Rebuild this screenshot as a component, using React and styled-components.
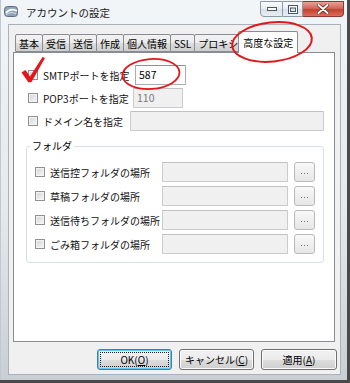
import React from "react";
import styled, { createGlobalStyle } from "styled-components";

const GlobalStyle = createGlobalStyle`
  html, body { margin: 0; padding: 0; background: #fff; }
  body {
    font-family: "Noto Sans CJK JP", "Noto Sans", sans-serif;
    font-size: 10px;
    color: #000;
  }
  * { box-sizing: border-box; }
`;

const Window = styled.div`
  position: relative;
  width: 350px;
  height: 383px;
  display: flex;
  flex-direction: column;
  padding: 0 9px 8px 8px;
  background: linear-gradient(180deg, #f2f5f8 0%, #e4e9ee 55%, #c9ced4 100%);
  box-shadow: inset -3px -3px 0 #4a4a4a, inset 1px 0 0 #c3c8ce;
  overflow: hidden;
`;

const TitleBar = styled.div`
  height: 24px;
  display: flex;
  align-items: flex-start;
`;

const TitleIcon = styled.svg`
  width: 15px;
  height: 13px;
  margin: 5px 0 0 -4px;
`;

const TitleText = styled.span`
  line-height: 24px;
  padding-top: 1px;
  margin-left: 7px;
  font-size: 10.5px;
  color: #1a1a1a;
`;

const CaptionGroup = styled.div`
  display: flex;
  margin-left: auto;
  margin-right: -3px;
  margin-top: 1px;
`;

const CaptionButton = styled.div`
  width: ${(p) => p.$w}px;
  height: 16px;
  display: flex;
  align-items: center;
  justify-content: center;
  border: 1px solid ${(p) => (p.$close ? "#8a3a33" : "#8e99a5")};
  border-left: ${(p) => (p.$first ? "1px solid #8e99a5" : "none")};
  border-radius: ${(p) => (p.$first ? "0 0 0 4px" : p.$close ? "0 0 4px 0" : "0")};
  background: ${(p) =>
    p.$close
      ? "linear-gradient(180deg, #e6a295 0%, #d0695a 45%, #c4412f 55%, #d8705d 100%)"
      : "linear-gradient(180deg, #f8fafc 0%, #e8edf2 50%, #d9e0e7 51%, #e9eef3 100%)"};
`;

const Client = styled.div`
  flex: 1;
  display: flex;
  flex-direction: column;
  background: #f0f0f0;
  border: 1px solid #a9b1ba;
  padding: 6px 3px 4px 4px;
`;

const TabStrip = styled.div`
  display: flex;
  align-items: flex-end;
  height: 21px;
  padding-left: 2px;
  position: relative;
  z-index: 1;
`;

const Tab = styled.div`
  height: ${(p) => (p.$active ? 22 : 18)}px;
  padding: 0 ${(p) => (p.$active ? 4 : 3)}px;
  line-height: ${(p) => (p.$active ? 21 : 17)}px;
  border: 1px solid #898c95;
  border-bottom: ${(p) => (p.$active ? "none" : "1px solid #898c95")};
  margin: 0 ${(p) => (p.$active ? "-2px -1px -3px" : "-1px 0 0")};
  border-radius: 2px 2px 0 0;
  white-space: nowrap;
  position: relative;
  z-index: ${(p) => (p.$active ? 2 : 0)};
  background: ${(p) =>
    p.$active
      ? "#fff"
      : "linear-gradient(180deg, #f2f2f2 0%, #ebebeb 50%, #dddddd 51%, #cfcfcf 100%)"};
`;

const Panel = styled.div`
  flex: 1;
  margin-right: 2px;
  background: #fff;
  border: 1px solid #898c95;
  padding: 12px 10px 0 14px;
  display: flex;
  flex-direction: column;
  gap: 3px;
`;

const Row = styled.div`
  display: flex;
  align-items: center;
  height: 20px;
`;

const CheckLabel = styled.label`
  flex: 0 0 ${(p) => p.$w}px;
  display: flex;
  align-items: center;
  gap: 5px;
  white-space: nowrap;
  color: #111;
`;

const Check = styled.span`
  width: 10px;
  height: 10px;
  border: 1px solid #8e8f8f;
  background: linear-gradient(135deg, #d3d3d3 0%, #e9e9e9 60%, #f9f9f9 100%);
  box-shadow: inset 0 0 0 1px #f4f4f4;
  flex: 0 0 auto;
`;

const TextBox = styled.div`
  height: 20px;
  width: ${(p) => (p.$w ? `${p.$w}px` : "auto")};
  flex: ${(p) => (p.$w ? "0 0 auto" : "1")};
  margin-left: ${(p) => p.$ml || 0}px;
  border: 1px solid ${(p) => (p.$disabled ? "#c9cbcf" : "#abadb3")};
  border-top-color: ${(p) => (p.$disabled ? "#bfc1c5" : "#8e9197")};
  border-radius: 1px;
  background: ${(p) => (p.$disabled ? "#f0f0f0" : "#fff")};
  color: ${(p) => (p.$disabled ? "#7a7a7a" : "#000")};
  padding: 0 3px;
  line-height: 18px;
  font-size: 10.5px;
`;

const Group = styled.fieldset`
  margin: 5px 0 0 -2px;
  border: 1px solid #d5dfe5;
  border-radius: 3px;
  padding: 9px 8px 8px 8px;
  display: flex;
  flex-direction: column;
  gap: 4px;
`;

const GroupTitle = styled.legend`
  margin-left: -5px;
  padding: 0 2px;
  line-height: 14px;
  font-size: 10px;
`;

const BrowseButton = styled.div`
  width: 21px;
  height: 20px;
  margin-left: 6px;
  border: 1px solid #b9b9b9;
  border-radius: 3px;
  background: linear-gradient(180deg, #f8f8f8 0%, #efefef 50%, #e6e6e6 100%);
  display: flex;
  align-items: center;
  justify-content: center;
  gap: 2px;
  padding-top: 3px;
`;

const Dot = styled.span`
  width: 1px;
  height: 1px;
  background: #6a7788;
`;

const ButtonRow = styled.div`
  display: flex;
  justify-content: flex-end;
  gap: 7px;
  margin-top: 7px;
`;

const DialogButton = styled.div`
  position: relative;
  width: ${(p) => p.$w || 75}px;
  height: 21px;
  border: 1px solid ${(p) => (p.$default ? "#3c7fb1" : "#707070")};
  border-radius: 3px;
  background: linear-gradient(180deg, #f2f2f2 0%, #ebebeb 50%, #dddddd 51%, #cfcfcf 100%);
  box-shadow: ${(p) => (p.$default ? "inset 0 0 0 1px #63c6ee" : "inset 0 0 0 1px #fbfbfb")};
  display: flex;
  align-items: center;
  justify-content: center;
  font-size: 10px;
  line-height: 1;

  &::after {
    content: "";
    display: ${(p) => (p.$default ? "block" : "none")};
    position: absolute;
    inset: 2px;
    border: 1px dotted #1d1d1d;
    border-radius: 1px;
  }
`;

const Overlay = styled.svg`
  position: absolute;
  left: 0;
  top: 0;
  width: 350px;
  height: 383px;
  pointer-events: none;
  z-index: 10;
`;

const tabs = ["基本", "受信", "送信", "作成", "個人情報", "SSL", "プロキシ"];
const folders = ["送信控フォルダの場所", "草稿フォルダの場所", "送信待ちフォルダの場所", "ごみ箱フォルダの場所"];

export default function App() {
  return (
    <>
      <GlobalStyle />
      <Window>
        <TitleBar>
          <TitleIcon viewBox="0 0 15 13">
            <rect x="0.5" y="1.5" width="13" height="10" rx="3" fill="#8fa3b8" stroke="#5d7087" />
            <path d="M2 8 C5 4, 9 4, 13 6" stroke="#fff" strokeWidth="1.6" fill="none" />
            <path d="M2 10 C5 7, 9 7, 12 9" stroke="#d9e3ee" strokeWidth="1" fill="none" />
          </TitleIcon>
          <TitleText>アカウントの設定</TitleText>
          <CaptionGroup>
            <CaptionButton $w={23} $first>
              <svg width="10" height="4" viewBox="0 0 10 4">
                <rect x="0.5" y="0.5" width="9" height="3" fill="#fff" stroke="#4c5866" />
              </svg>
            </CaptionButton>
            <CaptionButton $w={20}>
              <svg width="10" height="9" viewBox="0 0 10 9">
                <rect x="0.5" y="0.5" width="9" height="8" fill="#fff" stroke="#4c5866" />
                <rect x="2.5" y="3" width="5" height="3.5" fill="#dfe5ec" stroke="#4c5866" strokeWidth="1" />
              </svg>
            </CaptionButton>
            <CaptionButton $w={41} $close>
              <svg width="12" height="10" viewBox="0 0 12 10">
                <path d="M1.5 1 L10.5 9 M10.5 1 L1.5 9" stroke="#5a1e1a" strokeWidth="3.4" strokeLinecap="round" />
                <path d="M1.5 1 L10.5 9 M10.5 1 L1.5 9" stroke="#fff" strokeWidth="2" strokeLinecap="round" />
              </svg>
            </CaptionButton>
          </CaptionGroup>
        </TitleBar>

        <Client>
          <TabStrip>
            {tabs.map((t) => (
              <Tab key={t}>{t}</Tab>
            ))}
            <Tab $active>高度な設定</Tab>
          </TabStrip>

          <Panel>
            <Row>
              <CheckLabel $w={102}>
                <Check />
                SMTPポートを指定
              </CheckLabel>
              <TextBox $w={51} $ml={5}>587</TextBox>
            </Row>
            <Row>
              <CheckLabel $w={102}>
                <Check />
                POP3ポートを指定
              </CheckLabel>
              <TextBox $w={50} $ml={3} $disabled>110</TextBox>
            </Row>
            <Row>
              <CheckLabel $w={102}>
                <Check />
                ドメイン名を指定
              </CheckLabel>
              <TextBox $disabled />
            </Row>

            <Group>
              <GroupTitle>フォルダ</GroupTitle>
              {folders.map((f) => (
                <Row key={f}>
                  <CheckLabel $w={127}>
                    <Check />
                    {f}
                  </CheckLabel>
                  <TextBox $w={126} $disabled />
                  <BrowseButton>
                    <Dot />
                    <Dot />
                    <Dot />
                  </BrowseButton>
                </Row>
              ))}
            </Group>
          </Panel>

          <ButtonRow>
            <DialogButton $default>
              OK(<u>O</u>)
            </DialogButton>
            <DialogButton>
              キャンセル(<u>C</u>)
            </DialogButton>
            <DialogButton $w={76}>
              適用(<u>A</u>)
            </DialogButton>
          </ButtonRow>
        </Client>

        <Overlay viewBox="0 0 350 383">
          <ellipse cx="272" cy="42" rx="40" ry="19.5" transform="rotate(-6 272 42)" fill="none" stroke="#e3171b" strokeWidth="2" />
          <ellipse cx="151" cy="74" rx="28.5" ry="15" transform="rotate(-4 151 74)" fill="none" stroke="#e3171b" strokeWidth="1.8" />
          <path d="M21.5 72.5 L25.5 70 L30 76.5 L42.5 57 L45 58 L31.5 82 L28.5 82.5 Z" fill="#e3171b" />
        </Overlay>
      </Window>
    </>
  );
}
